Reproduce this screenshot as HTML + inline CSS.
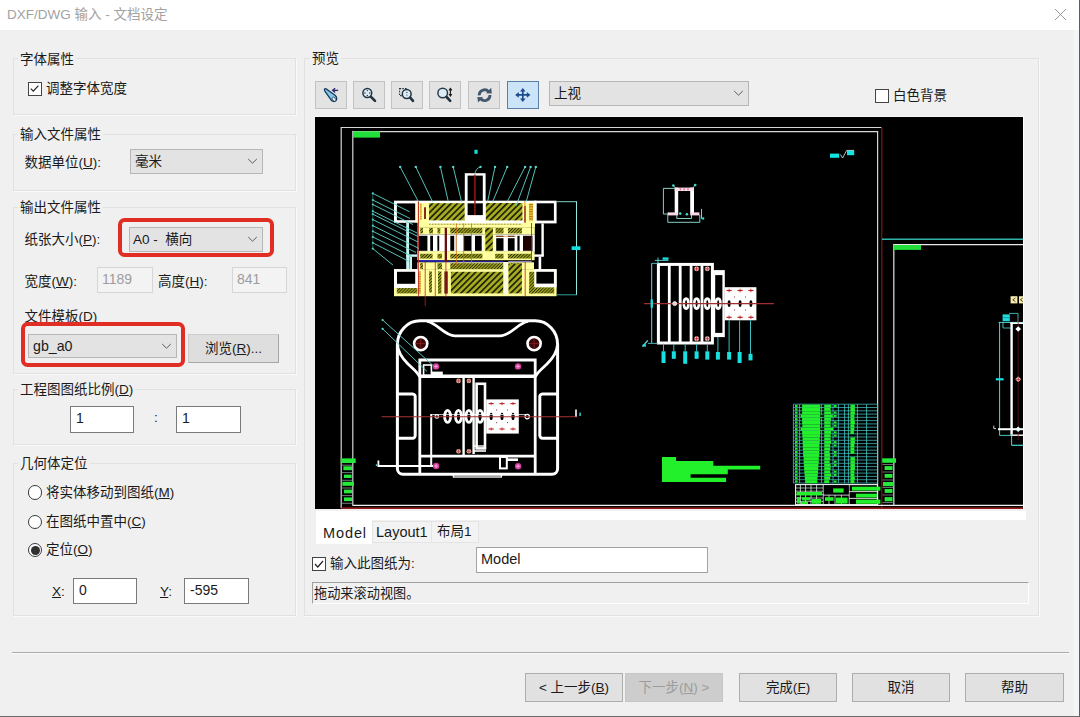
<!DOCTYPE html>
<html lang="zh-CN">
<head>
<meta charset="utf-8">
<title>DXF/DWG 输入 - 文档设定</title>
<style>
html,body{margin:0;padding:0;}
body{width:1080px;height:717px;overflow:hidden;background:#f0f0f0;position:relative;
 font-family:"Liberation Sans","Noto Sans CJK SC",sans-serif;font-size:13.5px;color:#1a1a1a;}
.abs{position:absolute;}
#titlebar{left:0;top:0;width:1080px;height:30px;background:#fff;}
#title{left:7px;top:5px;font-size:13.5px;color:#a2a2a2;line-height:20px;white-space:nowrap;}
.grp{position:absolute;border:1px solid #e1e1e1;box-shadow:1px 1px 0 #fafafa;box-sizing:border-box;}
.glabel{position:absolute;background:#f0f0f0;line-height:16px;white-space:nowrap;padding:0 2px;font-size:13.5px;}
.t{position:absolute;line-height:18px;white-space:nowrap;font-size:13.5px;}
u{text-decoration:underline;text-underline-offset:1px;text-decoration-thickness:1px;}
.combo{position:absolute;box-sizing:border-box;border:1px solid #b6b6b6;background:#e3e3e3;}
.combo .v{position:absolute;left:4px;top:0;line-height:22px;font-size:13.5px;white-space:nowrap;}
.combo svg{position:absolute;right:4px;top:8px;}
.inp{position:absolute;box-sizing:border-box;border:1px solid #7a7a7a;background:#fff;font-size:14px;}
.inp span{position:absolute;left:5px;top:1px;line-height:20px;}
.inp.dis span{left:4px;}
.inp.dis{border-color:#d6d6d6;background:#f3f3f3;color:#9d9d9d;}
.btn{position:absolute;box-sizing:border-box;border:1px solid #adadad;background:#e1e1e1;text-align:center;font-size:13.5px;white-space:nowrap;}
.red{position:absolute;box-sizing:border-box;border:4.2px solid #e02e24;border-radius:6.5px;}
.cb{position:absolute;box-sizing:border-box;width:14px;height:14px;border:1px solid #444;background:#fff;}
.rad{position:absolute;box-sizing:border-box;width:14.2px;height:14.2px;border:1px solid #3a3a3a;border-radius:50%;background:#fff;}
.tb{position:absolute;box-sizing:border-box;width:32px;height:28px;top:81px;border:1px solid #c2c2c2;background:#e3e3e3;}
</style>
</head>
<body>
<div id="titlebar" class="abs"></div>
<div id="title" class="abs">DXF/DWG 输入 - 文档设定</div>
<svg class="abs" style="left:1054px;top:8px" width="13" height="13" viewBox="0 0 13 13"><path d="M1 1 L12 12 M12 1 L1 12" stroke="#9a9a9a" stroke-width="1" fill="none"/></svg>

<div class="abs" style="left:1074px;top:30px;width:5px;height:686px;background:#f5f5f8;"></div>
<div class="abs" style="left:1079px;top:0;width:1px;height:717px;background:#5c5c64;"></div>
<div class="abs" style="left:0;top:716px;width:1080px;height:1px;background:#6a6a6a;"></div>
<!-- LEFT GROUPS -->
<div class="grp" style="left:13px;top:58px;width:283px;height:57px;"></div>
<div class="glabel" style="left:18px;top:52px;">字体属性</div>

<div class="grp" style="left:13px;top:134px;width:283px;height:57px;"></div>
<div class="glabel" style="left:18px;top:127px;">输入文件属性</div>

<div class="grp" style="left:13px;top:207px;width:283px;height:167px;"></div>
<div class="glabel" style="left:18px;top:200px;">输出文件属性</div>

<div class="grp" style="left:13px;top:389px;width:283px;height:56px;"></div>
<div class="glabel" style="left:18px;top:382px;">工程图图纸比例(<u>D</u>)</div>

<div class="grp" style="left:13px;top:463px;width:283px;height:153px;"></div>
<div class="glabel" style="left:18px;top:456px;">几何体定位</div>

<!-- PREVIEW GROUP -->
<div class="grp" style="left:304px;top:58px;width:735px;height:558px;"></div>
<div class="glabel" style="left:310px;top:51px;">预览</div>

<!-- group 1 -->
<div class="cb" style="left:28px;top:82px;"></div>
<svg class="abs" style="left:28px;top:82px" width="13" height="13" viewBox="0 0 13 13"><path d="M2.8 6.6 L5.3 9.2 L10.4 3.6" stroke="#222" stroke-width="1.2" fill="none"/></svg>
<div class="t" style="left:46px;top:80px;">调整字体宽度</div>

<!-- group 2 -->
<div class="t" style="left:24.5px;top:153.5px;">数据单位(<u>U</u>):</div>
<div class="combo" style="left:130px;top:149px;width:133px;height:25px;"><span class="v" style="top:1px">毫米</span>
<svg width="11" height="7" viewBox="0 0 11 7"><path d="M1.2 1 L5.5 5.2 L9.8 1" stroke="#5a5a5a" stroke-width="1" fill="none"/></svg></div>

<!-- group 3 -->
<div class="t" style="left:24.5px;top:231px;">纸张大小(<u>P</u>):</div>
<div class="red" style="left:118px;top:218px;width:156px;height:39px;"></div>
<div class="combo" style="left:129px;top:227px;width:134px;height:25px;"><span class="v" style="top:1px;left:3px">A0 -&nbsp; 横向</span>
<svg width="11" height="7" viewBox="0 0 11 7"><path d="M1.2 1 L5.5 5.2 L9.8 1" stroke="#5a5a5a" stroke-width="1" fill="none"/></svg></div>

<div class="t" style="left:24.5px;top:273px;">宽度(<u>W</u>):</div>
<div class="inp dis" style="left:97px;top:267px;width:56px;height:26px;"><span>1189</span></div>
<div class="t" style="left:158px;top:273px;">高度(<u>H</u>):</div>
<div class="inp dis" style="left:232px;top:267px;width:55px;height:26px;"><span>841</span></div>

<div class="t" style="left:24.5px;top:307.6px;">文件模板(<u>D</u>)</div>
<div class="red" style="left:20.8px;top:322px;width:164.2px;height:45px;"></div>
<div class="combo" style="left:28px;top:334px;width:149px;height:24px;"><span class="v" style="top:0px;left:4px;font-size:14.2px">gb_a0</span>
<svg width="11" height="7" viewBox="0 0 11 7"><path d="M1.2 1 L5.5 5.2 L9.8 1" stroke="#5a5a5a" stroke-width="1" fill="none"/></svg></div>
<div class="btn" style="left:188px;top:334px;width:91px;height:29px;line-height:27px;border-color:#cdcdcd #a6a6a6 #a6a6a6 #cdcdcd;background:#dedede;">浏览(<u>R</u>)...</div>

<!-- group 4 -->
<div class="inp" style="left:70px;top:406px;width:64px;height:27px;"><span>1</span></div>
<div class="t" style="left:154px;top:409px;">:</div>
<div class="inp" style="left:176px;top:406px;width:65px;height:27px;"><span>1</span></div>

<!-- group 5 -->
<div class="rad" style="left:28.3px;top:485.4px;"></div>
<div class="t" style="left:46px;top:484px;">将实体移动到图纸(<u>M</u>)</div>
<div class="rad" style="left:28.3px;top:514.6px;"></div>
<div class="t" style="left:46px;top:513px;">在图纸中置中(<u>C</u>)</div>
<div class="rad" style="left:28.3px;top:543.1px;"></div>
<div class="abs" style="left:30.8px;top:545.6px;width:9px;height:9px;border-radius:50%;background:#303030;"></div>
<div class="t" style="left:46px;top:541.4px;">定位(<u>O</u>)</div>

<div class="t" style="left:52px;top:583px;"><u>X</u>:</div>
<div class="inp" style="left:73px;top:578px;width:64px;height:26px;"><span>0</span></div>
<div class="t" style="left:160px;top:583px;"><u>Y</u>:</div>
<div class="inp" style="left:184px;top:578px;width:65px;height:26px;"><span>-595</span></div>

<!-- separator -->
<div class="abs" style="left:12px;top:652px;width:1057px;height:1px;background:#a9a9a9;"></div>
<div class="abs" style="left:12px;top:653px;width:1057px;height:1px;background:#fbfbfb;"></div>

<!-- bottom buttons -->
<div class="btn" style="left:525px;top:673px;width:98px;height:29px;line-height:27px;">&lt; 上一步(<u>B</u>)</div>
<div class="btn" style="left:625px;top:673px;width:98px;height:29px;line-height:27px;color:#9c9c9c;background:#cdcdcd;border-color:#c6c6c6;">下一步(<u>N</u>) &gt;</div>
<div class="btn" style="left:739px;top:673px;width:98px;height:29px;line-height:27px;">完成(<u>F</u>)</div>
<div class="btn" style="left:852px;top:673px;width:98px;height:29px;line-height:27px;">取消</div>
<div class="btn" style="left:965px;top:673px;width:99px;height:29px;line-height:27px;">帮助</div>
<!-- toolbar -->
<div class="tb" style="left:315px;"></div>
<div class="tb" style="left:353px;"></div>
<div class="tb" style="left:391px;"></div>
<div class="tb" style="left:429px;"></div>
<div class="tb" style="left:468px;"></div>
<div class="tb" style="left:507px;background:#cce4f7;border-color:#5b7fa6;"></div>
<svg class="abs" style="left:315px;top:81px" width="224" height="28" viewBox="315 81 224 28">
 <!-- icon1 flashlight -->
 <g>
  <path d="M324.3 89.6 Q324.6 88.4 326 88.8 L335.4 95.6 Q337.6 98 336.2 100.4 Q334.4 102.4 331.8 100.8 L325 91.4 Z" fill="#86c4e6" stroke="#123456" stroke-width="1.2" stroke-linejoin="round"/>
  <ellipse cx="334" cy="99.2" rx="1.5" ry="2.3" transform="rotate(-42 334 99.2)" fill="#e8f8ff" stroke="#123456" stroke-width="0.7"/>
  <path d="M338.2 90.3 H333 M335.2 88.2 L332.6 90.3 L335.2 92.4" stroke="#2c2c6c" stroke-width="1.3" fill="none"/>
 </g>
 <!-- icon2 zoom fit -->
 <g>
  <circle cx="367.3" cy="93" r="4.4" fill="#dcecf6" stroke="#22323e" stroke-width="1.5"/>
  <path d="M371 96.8 L375 100.8" stroke="#22323e" stroke-width="2.6" stroke-linecap="round"/>
  <g fill="#22323e"><circle cx="367.3" cy="90.6" r="0.7"/><circle cx="367.3" cy="95.4" r="0.7"/><circle cx="364.9" cy="93" r="0.7"/><circle cx="369.7" cy="93" r="0.7"/></g>
 </g>
 <!-- icon3 zoom area -->
 <g>
  <rect x="399.6" y="88.6" width="7" height="7" fill="none" stroke="#22323e" stroke-width="1.1" stroke-dasharray="1.6 1.1"/>
  <circle cx="406.7" cy="94" r="4.4" fill="#dcecf6" stroke="#22323e" stroke-width="1.5"/>
  <path d="M410.2 97.6 L413 100.8" stroke="#22323e" stroke-width="2.6" stroke-linecap="round"/>
  <g fill="#22323e"><circle cx="406.9" cy="92.4" r="0.6"/><circle cx="406.9" cy="95" r="0.6"/></g>
 </g>
 <!-- icon4 zoom in/out -->
 <g>
  <circle cx="442.7" cy="93" r="4.8" fill="#dcecf6" stroke="#2a3c4a" stroke-width="1.5"/>
  <path d="M446.6 97 L450.2 100.8" stroke="#22323e" stroke-width="2.6" stroke-linecap="round"/>
  <path d="M450.4 89 V95.4 M449 90.4 L450.4 88.4 L451.8 90.4 M449 94 L450.4 96 L451.8 94" stroke="#1a1a1a" stroke-width="1.1" fill="none"/>
 </g>
 <!-- icon5 rotate -->
 <g fill="none" stroke="#43576b" stroke-width="2.8">
  <path d="M479.2 95.4 A5.4 5.4 0 0 1 488.6 91.6"/>
  <path d="M490 95 A5.4 5.4 0 0 1 480.6 98.8"/>
  <path d="M486 93.2 L491.8 93.4 L491.2 87.8 Z" fill="#43576b" stroke="none"/>
  <path d="M483.2 97.2 L477.4 97 L478 102.6 Z" fill="#43576b" stroke="none"/>
 </g>
 <!-- icon6 pan -->
 <g fill="#1c4a8e" stroke="#1c4a8e">
  <path d="M522.8 90 V100 M517.4 94.9 H528.2" stroke-width="1.7"/>
  <path d="M522.8 88 L520 91.4 H525.6 Z M522.8 102 L520 98.6 H525.6 Z M515.2 94.9 L518.8 92.1 V97.7 Z M530.4 94.9 L526.8 92.1 V97.7 Z" stroke="none"/>
 </g>
</svg>
<div class="combo" style="left:549px;top:81px;width:200px;height:25px;"><span class="v" style="top:1px;left:4px">上视</span>
<svg width="11" height="7" viewBox="0 0 11 7"><path d="M1.2 1 L5.5 5.2 L9.8 1" stroke="#5a5a5a" stroke-width="1" fill="none"/></svg></div>
<div class="cb" style="left:875px;top:89px;"></div>
<div class="t" style="left:893px;top:87px;">白色背景</div>

<!-- canvas -->
<div class="abs" style="left:315px;top:117px;width:708px;height:392px;background:#000;box-shadow:1px 0 0 #fff,0 -1px 0 #f8f8f8,1px -1px 0 #fff;"></div>
<!--CAD-->
<svg class="abs" style="left:315px;top:117px" width="708" height="392" viewBox="315 117 708 392">
<defs>
<pattern id="hat" width="4.4" height="4.4" patternUnits="userSpaceOnUse" patternTransform="rotate(-45)">
<rect width="4.4" height="4.4" fill="#a6ac22"/><rect width="4.4" height="1.6" fill="#181800"/></pattern>
<pattern id="hat2" width="2.2" height="2.2" patternUnits="userSpaceOnUse" patternTransform="rotate(-45)">
<rect width="2.2" height="2.2" fill="#a4aa22"/><rect width="2.2" height="0.9" fill="#2a2a00"/></pattern>
<pattern id="tex" width="2" height="2.4" patternUnits="userSpaceOnUse">
<rect width="2" height="2.4" fill="#e8c040"/><rect width="2" height="1" fill="#b07818"/></pattern>
</defs>
<rect x="315" y="117" width="708" height="392" fill="#000"/>
<line x1="341.0" y1="127.5" x2="881.5" y2="127.5" stroke="#d6d6d6" stroke-width="1.2" />
<line x1="341.2" y1="127.0" x2="341.2" y2="508.0" stroke="#d6d6d6" stroke-width="1.2" />
<line x1="881.8" y1="127.0" x2="881.8" y2="509.0" stroke="#941414" stroke-width="1.1" />
<line x1="341.0" y1="508.2" x2="1023.0" y2="508.2" stroke="#c42424" stroke-width="1.3" />
<line x1="352.6" y1="131.6" x2="877.6" y2="131.6" stroke="#d6d6d6" stroke-width="1.2" />
<line x1="352.8" y1="131.0" x2="352.8" y2="505.5" stroke="#d6d6d6" stroke-width="1.2" />
<line x1="877.6" y1="131.0" x2="877.6" y2="505.5" stroke="#d6d6d6" stroke-width="1.2" />
<line x1="352.6" y1="505.3" x2="1023.0" y2="505.3" stroke="#f0f0f0" stroke-width="1.3" />
<rect x="353.0" y="131.4" width="27.0" height="6.2" fill="#22e03a" />
<line x1="882.0" y1="239.3" x2="1023.0" y2="239.3" stroke="#2fb3a8" stroke-width="1.4" />
<line x1="893.6" y1="244.6" x2="1023.0" y2="244.6" stroke="#e8e8e8" stroke-width="1.3" />
<line x1="893.8" y1="244.0" x2="893.8" y2="505.5" stroke="#d0d0d0" stroke-width="1.3" />
<rect x="894.0" y="245.0" width="27.0" height="4.9" fill="#22dd3a" />
<line x1="341.5" y1="465.2" x2="352.5" y2="465.2" stroke="#8a9a9a" stroke-width="0.8" />
<line x1="341.5" y1="472.6" x2="352.5" y2="472.6" stroke="#8a9a9a" stroke-width="0.8" />
<line x1="341.5" y1="480.3" x2="352.5" y2="480.3" stroke="#8a9a9a" stroke-width="0.8" />
<line x1="341.5" y1="488.0" x2="352.5" y2="488.0" stroke="#8a9a9a" stroke-width="0.8" />
<line x1="341.5" y1="495.6" x2="352.5" y2="495.6" stroke="#8a9a9a" stroke-width="0.8" />
<line x1="341.5" y1="503.3" x2="352.5" y2="503.3" stroke="#8a9a9a" stroke-width="0.8" />
<rect x="340.7" y="458.4" width="15.0" height="4.6" fill="#25e83a" />
<rect x="343.4" y="466.3" width="8.6" height="3.9" fill="#25e83a" />
<rect x="344.0" y="474.6" width="7.6" height="3.4" fill="#25e83a" />
<rect x="342.4" y="481.8" width="11.6" height="4.0" fill="#25e83a" />
<rect x="344.0" y="489.6" width="8.0" height="3.7" fill="#25e83a" />
<rect x="344.0" y="497.4" width="8.0" height="3.7" fill="#25e83a" />
<line x1="882.5" y1="464.5" x2="893.5" y2="464.5" stroke="#7a9090" stroke-width="0.8" />
<line x1="882.5" y1="472.0" x2="893.5" y2="472.0" stroke="#7a9090" stroke-width="0.8" />
<line x1="882.5" y1="480.0" x2="893.5" y2="480.0" stroke="#7a9090" stroke-width="0.8" />
<line x1="882.5" y1="487.5" x2="893.5" y2="487.5" stroke="#7a9090" stroke-width="0.8" />
<line x1="882.5" y1="495.0" x2="893.5" y2="495.0" stroke="#7a9090" stroke-width="0.8" />
<line x1="882.5" y1="502.5" x2="893.5" y2="502.5" stroke="#7a9090" stroke-width="0.8" />
<rect x="882.2" y="458.3" width="13.8" height="4.5" fill="#25e83a" />
<rect x="884.6" y="466.1" width="7.9" height="3.9" fill="#25e83a" />
<rect x="884.6" y="474.0" width="7.9" height="3.8" fill="#25e83a" />
<rect x="883.0" y="482.0" width="11.0" height="4.2" fill="#25e83a" />
<rect x="884.6" y="489.0" width="7.9" height="3.9" fill="#25e83a" />
<rect x="884.6" y="497.1" width="7.9" height="4.2" fill="#25e83a" />
<rect x="830.0" y="153.6" width="9.2" height="4.2" fill="#10e4e4" />
<rect x="847.0" y="150.6" width="7.2" height="4.6" fill="#10e4e4" />
<path d="M840.5 154.5 L842.6 158 L846.6 150.4 H854" stroke="#c8f0f0" stroke-width="0.8" fill="none"/>
<rect x="415.4" y="201.0" width="121.0" height="22.2" fill="#ffffa0" />
<rect x="394.0" y="200.7" width="22.6" height="22.1" fill="#fff" />
<rect x="396.9" y="203.4" width="18.3" height="16.8" fill="#000" />
<rect x="534.2" y="200.7" width="22.4" height="22.7" fill="#fff" />
<rect x="536.7" y="203.3" width="17.2" height="17.3" fill="#000" />
<rect x="415.4" y="200.7" width="121.0" height="2.3" fill="#fff" />
<rect x="429.0" y="203.2" width="35.8" height="17.4" fill="url(#hat)" />
<rect x="485.6" y="203.0" width="36.8" height="17.6" fill="url(#hat)" />
<line x1="418.4" y1="201.0" x2="418.4" y2="296.0" stroke="#d87820" stroke-width="0.9" />
<rect x="424.1" y="207.3" width="1.8" height="11.7" fill="#7a1010" />
<rect x="420.2" y="203.5" width="1.4" height="16.5" fill="url(#tex)" />
<line x1="524.9" y1="201.0" x2="524.9" y2="234.0" stroke="#e08020" stroke-width="0.9" />
<rect x="524.4" y="206.0" width="1.2" height="28.0" fill="#8a1414" />
<rect x="529.0" y="203.4" width="4.0" height="17.3" fill="url(#tex)" />
<rect x="464.8" y="173.2" width="20.8" height="49.4" fill="#fff" />
<rect x="467.6" y="175.6" width="15.2" height="39.5" fill="#000" />
<rect x="464.8" y="200.8" width="20.8" height="2.5" fill="#fff" />
<line x1="474.9" y1="174.6" x2="474.9" y2="215.0" stroke="#a01818" stroke-width="1.4" />
<rect x="417.4" y="222.6" width="117.6" height="5.0" fill="#ffffa0" />
<rect x="428.6" y="220.6" width="94.4" height="2.8" fill="#fff" />
<line x1="429.0" y1="224.2" x2="522.0" y2="224.2" stroke="#807020" stroke-width="1" stroke-dasharray="0.8 0.7"/>
<rect x="417.4" y="227.4" width="117.4" height="7.2" fill="#ffffa0" />
<rect x="420.2" y="228.0" width="2.8" height="5.4" fill="url(#hat2)" />
<rect x="429.1" y="228.0" width="3.9" height="5.4" fill="url(#hat2)" />
<rect x="437.5" y="228.0" width="2.8" height="5.4" fill="url(#hat2)" />
<rect x="450.3" y="228.0" width="32.0" height="5.4" fill="url(#hat2)" />
<rect x="485.6" y="228.0" width="6.7" height="5.4" fill="url(#hat2)" />
<rect x="495.6" y="228.0" width="7.9" height="5.4" fill="url(#hat2)" />
<rect x="507.9" y="228.0" width="14.0" height="5.4" fill="url(#hat2)" />
<rect x="417.4" y="234.6" width="117.4" height="17.0" fill="#fff" />
<rect x="418.5" y="235.8" width="8.9" height="15.0" fill="#000" />
<rect x="430.2" y="235.8" width="2.8" height="15.0" fill="#000" />
<rect x="437.4" y="235.8" width="1.8" height="15.0" fill="#000" />
<rect x="450.3" y="235.8" width="3.9" height="15.0" fill="#000" />
<rect x="463.7" y="235.8" width="7.8" height="15.0" fill="#000" />
<rect x="475.0" y="235.8" width="6.7" height="15.0" fill="#000" />
<rect x="496.2" y="235.8" width="7.3" height="15.0" fill="#000" />
<rect x="507.9" y="235.8" width="6.7" height="15.0" fill="#000" />
<rect x="517.4" y="235.8" width="2.2" height="15.0" fill="#000" />
<rect x="523.0" y="235.8" width="9.5" height="15.0" fill="#1c0000" />
<rect x="455.6" y="235.8" width="0.8" height="15.0" fill="#9ec8d8" />
<line x1="495.6" y1="237.6" x2="515.8" y2="237.6" stroke="#fff" stroke-width="1.2" />
<line x1="495.6" y1="236.3" x2="515.8" y2="236.3" stroke="#e08030" stroke-width="0.7" />
<rect x="485.2" y="227.8" width="7.7" height="31.4" fill="url(#hat)" />
<rect x="483.6" y="234.6" width="1.6" height="24.4" fill="#ffffa0" />
<rect x="492.9" y="234.6" width="1.7" height="24.4" fill="#ffffa0" />
<rect x="406.2" y="222.8" width="3.0" height="46.5" fill="#c8f4f4" />
<rect x="409.2" y="222.8" width="8.2" height="28.6" fill="#000" />
<rect x="406.2" y="254.4" width="10.8" height="2.4" fill="#c8f4f4" />
<rect x="409.4" y="256.8" width="2.6" height="12.5" fill="#c8f4f4" />
<rect x="541.4" y="223.4" width="2.4" height="32.4" fill="#fff" />
<rect x="534.0" y="254.4" width="9.8" height="2.4" fill="#fff" />
<rect x="538.6" y="256.8" width="2.6" height="12.5" fill="#fff" />
<rect x="417.4" y="251.2" width="117.2" height="9.0" fill="#ffffa0" />
<rect x="420.2" y="253.8" width="12.4" height="4.7" fill="url(#hat2)" />
<rect x="437.5" y="253.8" width="4.5" height="4.7" fill="url(#hat2)" />
<rect x="450.3" y="253.8" width="32.1" height="4.7" fill="url(#hat2)" />
<rect x="495.2" y="253.8" width="8.3" height="4.7" fill="url(#hat2)" />
<rect x="507.9" y="253.8" width="22.9" height="4.7" fill="url(#hat2)" />
<path d="M418 261 H443 L445 262 H503.5" stroke="#2828d0" stroke-width="1.5" fill="none"/>
<line x1="508.0" y1="261.8" x2="532.0" y2="261.8" stroke="#9a90e0" stroke-width="1.3" />
<rect x="417.4" y="262.3" width="116.6" height="7.1" fill="#ffffa0" />
<rect x="420.2" y="263.2" width="2.8" height="5.8" fill="url(#hat2)" />
<rect x="437.5" y="263.2" width="4.5" height="5.8" fill="url(#hat2)" />
<rect x="450.3" y="263.2" width="53.2" height="5.8" fill="url(#hat2)" />
<rect x="508.5" y="263.2" width="13.4" height="5.8" fill="url(#hat2)" />
<rect x="394.0" y="269.2" width="162.6" height="27.0" fill="#ffffa0" />
<rect x="394.0" y="269.2" width="23.4" height="18.8" fill="#fff" />
<rect x="397.0" y="271.8" width="18.2" height="12.0" fill="#000" />
<rect x="396.8" y="288.0" width="20.6" height="5.4" fill="url(#hat2)" />
<rect x="534.2" y="269.2" width="22.4" height="18.2" fill="#fff" />
<rect x="536.4" y="271.8" width="17.5" height="11.8" fill="#000" />
<rect x="529.2" y="287.4" width="25.0" height="6.0" fill="url(#hat2)" />
<rect x="529.2" y="271.8" width="5.0" height="21.6" fill="url(#hat2)" />
<rect x="418.2" y="271.4" width="2.6" height="22.2" fill="url(#tex)" />
<rect x="429.1" y="271.4" width="2.8" height="21.0" fill="url(#hat2)" />
<rect x="438.0" y="271.4" width="3.4" height="22.2" fill="url(#hat2)" />
<rect x="444.4" y="271.4" width="3.3" height="22.2" fill="#5a0c0c" />
<rect x="444.7" y="227.8" width="2.3" height="34.2" fill="#6a1010" />
<rect x="450.9" y="271.8" width="52.6" height="21.6" fill="url(#hat)" />
<rect x="503.5" y="262.0" width="4.7" height="32.5" fill="#ffffe0" />
<rect x="508.5" y="264.0" width="13.4" height="29.4" fill="url(#hat)" />
<line x1="418.5" y1="201.0" x2="418.5" y2="297.0" stroke="#c02020" stroke-width="0.8" />
<line x1="425.2" y1="262.0" x2="425.2" y2="306.0" stroke="#c02020" stroke-width="0.8" />
<line x1="435.3" y1="262.0" x2="435.3" y2="296.0" stroke="#c02020" stroke-width="0.8" />
<line x1="445.9" y1="262.0" x2="445.9" y2="297.0" stroke="#c02020" stroke-width="0.8" />
<line x1="525.2" y1="262.0" x2="525.2" y2="296.0" stroke="#c02020" stroke-width="0.8" />
<line x1="456.4" y1="223.5" x2="456.4" y2="266.0" stroke="#d06a20" stroke-width="0.8" />
<line x1="463.7" y1="223.5" x2="463.7" y2="266.0" stroke="#d06a20" stroke-width="0.8" />
<line x1="471.5" y1="223.5" x2="471.5" y2="266.0" stroke="#d06a20" stroke-width="0.8" />
<line x1="531.5" y1="223.0" x2="531.5" y2="262.0" stroke="#802020" stroke-width="0.8" />
<line x1="556.6" y1="201.7" x2="577.0" y2="201.7" stroke="#8fe8e0" stroke-width="0.9" />
<line x1="556.6" y1="294.8" x2="577.0" y2="294.8" stroke="#38b0a8" stroke-width="0.9" />
<line x1="576.5" y1="201.7" x2="576.5" y2="294.8" stroke="#8fe8e0" stroke-width="1" />
<rect x="571.6" y="246.3" width="8.8" height="3.7" fill="#10e0e0" />
<line x1="400.2" y1="166.9" x2="418.4" y2="201.7" stroke="#5cd6cc" stroke-width="0.9" />
<circle cx="400.2" cy="166.9" r="1.2" fill="#5cd6cc"/>
<line x1="415.8" y1="166.9" x2="432.5" y2="201.7" stroke="#5cd6cc" stroke-width="0.9" />
<circle cx="415.8" cy="166.9" r="1.2" fill="#5cd6cc"/>
<line x1="440.4" y1="166.9" x2="448.1" y2="200.8" stroke="#5cd6cc" stroke-width="0.9" />
<circle cx="440.4" cy="166.9" r="1.2" fill="#5cd6cc"/>
<line x1="453.2" y1="166.9" x2="461.5" y2="201.7" stroke="#5cd6cc" stroke-width="0.9" />
<circle cx="453.2" cy="166.9" r="1.2" fill="#5cd6cc"/>
<line x1="495.0" y1="166.9" x2="487.6" y2="201.7" stroke="#5cd6cc" stroke-width="0.9" />
<circle cx="495.0" cy="166.9" r="1.2" fill="#5cd6cc"/>
<line x1="507.2" y1="166.9" x2="492.7" y2="201.7" stroke="#5cd6cc" stroke-width="0.9" />
<circle cx="507.2" cy="166.9" r="1.2" fill="#5cd6cc"/>
<line x1="525.1" y1="166.9" x2="507.2" y2="201.7" stroke="#5cd6cc" stroke-width="0.9" />
<circle cx="525.1" cy="166.9" r="1.2" fill="#5cd6cc"/>
<line x1="530.6" y1="166.9" x2="516.1" y2="205.8" stroke="#5cd6cc" stroke-width="0.9" />
<circle cx="530.6" cy="166.9" r="1.2" fill="#5cd6cc"/>
<line x1="535.8" y1="166.9" x2="526.2" y2="201.7" stroke="#5cd6cc" stroke-width="0.9" />
<circle cx="535.8" cy="166.9" r="1.2" fill="#5cd6cc"/>
<path d="M480.5 166.9 Q475.5 168.5 474.9 174" stroke="#5cd6cc" stroke-width="0.9" fill="none"/>
<circle cx="480.5" cy="166.9" r="1.2" fill="#5cd6cc"/>
<rect x="474.4" y="149.8" width="3.2" height="4.0" fill="#10e0e0" />
<line x1="372.8" y1="193.4" x2="409.6" y2="211.8" stroke="#5cd6cc" stroke-width="0.9" />
<circle cx="372.8" cy="193.4" r="1.1" fill="#5cd6cc"/>
<line x1="372.8" y1="200.0" x2="410.0" y2="218.5" stroke="#5cd6cc" stroke-width="0.9" />
<circle cx="372.8" cy="200.0" r="1.1" fill="#5cd6cc"/>
<line x1="372.8" y1="204.5" x2="413.0" y2="224.5" stroke="#5cd6cc" stroke-width="0.9" />
<circle cx="372.8" cy="204.5" r="1.1" fill="#5cd6cc"/>
<line x1="372.8" y1="211.2" x2="417.0" y2="233.0" stroke="#5cd6cc" stroke-width="0.9" />
<circle cx="372.8" cy="211.2" r="1.1" fill="#5cd6cc"/>
<line x1="372.8" y1="214.2" x2="418.0" y2="236.5" stroke="#5cd6cc" stroke-width="0.9" />
<circle cx="372.8" cy="214.2" r="1.1" fill="#5cd6cc"/>
<line x1="372.8" y1="219.6" x2="418.0" y2="242.0" stroke="#5cd6cc" stroke-width="0.9" />
<circle cx="372.8" cy="219.6" r="1.1" fill="#5cd6cc"/>
<line x1="372.8" y1="225.7" x2="419.0" y2="248.5" stroke="#5cd6cc" stroke-width="0.9" />
<circle cx="372.8" cy="225.7" r="1.1" fill="#5cd6cc"/>
<line x1="372.8" y1="231.3" x2="416.0" y2="252.5" stroke="#5cd6cc" stroke-width="0.9" />
<circle cx="372.8" cy="231.3" r="1.1" fill="#5cd6cc"/>
<line x1="372.8" y1="236.9" x2="412.0" y2="256.5" stroke="#5cd6cc" stroke-width="0.9" />
<circle cx="372.8" cy="236.9" r="1.1" fill="#5cd6cc"/>
<line x1="372.8" y1="242.8" x2="408.5" y2="261.2" stroke="#5cd6cc" stroke-width="0.9" />
<circle cx="372.8" cy="242.8" r="1.1" fill="#5cd6cc"/>
<line x1="372.8" y1="248.6" x2="392.9" y2="265.0" stroke="#5cd6cc" stroke-width="0.9" />
<circle cx="372.8" cy="248.6" r="1.1" fill="#5cd6cc"/>
<line x1="372.8" y1="193.4" x2="372.8" y2="248.6" stroke="#3a9a94" stroke-width="0.6" />
<path d="M420 320.8 H535.2 A22.4 23.6 0 0 1 557.6 344.4 V468.7 A5.6 5.6 0 0 1 552 474.3 H403 A5.6 5.6 0 0 1 397.4 468.7 V344.4 A22.6 23.6 0 0 1 420 320.8 Z" fill="none" stroke="#fff" stroke-width="3"/>
<path d="M427 321.4 C437 322.6 444 335.8 455 335.9 H500 C511 335.8 518 322.6 528.2 321.4" fill="none" stroke="#fff" stroke-width="2.8"/>
<path d="M397.6 345 C398 354 404 360 408 364 S418 372 419.6 377" fill="none" stroke="#fff" stroke-width="2.8"/>
<path d="M557.4 345 C557 354 551 360 547 364 S537 372 535.4 377" fill="none" stroke="#fff" stroke-width="2.8"/>
<circle cx="420.7" cy="343.6" r="6.6" fill="#3a0808" stroke="#fff" stroke-width="2.6"/>
<line x1="415.7" y1="343.6" x2="425.7" y2="343.6" stroke="#902020" stroke-width="0.8" />
<line x1="420.7" y1="338.6" x2="420.7" y2="348.6" stroke="#902020" stroke-width="0.8" />
<circle cx="534.1" cy="343.6" r="6.6" fill="#3a0808" stroke="#fff" stroke-width="2.6"/>
<line x1="529.1" y1="343.6" x2="539.1" y2="343.6" stroke="#902020" stroke-width="0.8" />
<line x1="534.1" y1="338.6" x2="534.1" y2="348.6" stroke="#902020" stroke-width="0.8" />
<path d="M419.8 474.3 V360 H535.2 V474.3" fill="none" stroke="#fff" stroke-width="2.8"/>
<line x1="419.8" y1="376.2" x2="535.2" y2="376.2" stroke="#fff" stroke-width="3.4" />
<line x1="419.8" y1="456.2" x2="535.2" y2="456.2" stroke="#fff" stroke-width="2.8" />
<line x1="431.2" y1="414.0" x2="431.2" y2="466.6" stroke="#fff" stroke-width="2" />
<path d="M397.4 394 H412.6 A2.6 2.6 0 0 1 415.2 397.2 V435.6 A2.6 2.6 0 0 1 412.6 438.2 H397.4" fill="none" stroke="#fff" stroke-width="3"/>
<path d="M557.6 394 H542.4 A2.6 2.6 0 0 0 539.8 397.2 V435.6 A2.6 2.6 0 0 0 542.4 438.2 H557.6" fill="none" stroke="#fff" stroke-width="3"/>
<rect x="423.6" y="365.0" width="7.8" height="10.4" fill="none" stroke="#fff" stroke-width="1.6" />
<rect x="431.4" y="371.6" width="11.4" height="4.4" fill="#fff" />
<rect x="500.0" y="457.0" width="6.8" height="11.4" fill="none" stroke="#fff" stroke-width="2" />
<rect x="507.0" y="458.4" width="11.0" height="2.6" fill="#fff" />
<rect x="453.4" y="474.4" width="48.0" height="2.6" fill="none" stroke="#fff" stroke-width="1.3" />
<line x1="463.6" y1="376.6" x2="463.6" y2="457.0" stroke="#fff" stroke-width="2.4" />
<line x1="473.6" y1="376.6" x2="473.6" y2="454.0" stroke="#fff" stroke-width="2.4" />
<rect x="476.6" y="383.8" width="8.4" height="64.6" fill="none" stroke="#fff" stroke-width="2.6" />
<line x1="473.6" y1="446.0" x2="485.2" y2="446.0" stroke="#fff" stroke-width="1.4" />
<line x1="473.6" y1="451.0" x2="486.0" y2="451.0" stroke="#fff" stroke-width="1.6" />
<rect x="486.2" y="399.4" width="32.6" height="34.2" fill="#fff" />
<ellipse cx="491.2" cy="416.4" rx="1.6" ry="3.6" fill="#000"/>
<line x1="488.6" y1="403.6" x2="493.8" y2="403.6" stroke="#c02020" stroke-width="1.1" />
<line x1="491.2" y1="402.0" x2="491.2" y2="405.2" stroke="#c02020" stroke-width="0.8" />
<line x1="488.6" y1="429.0" x2="493.8" y2="429.0" stroke="#c02020" stroke-width="1.1" />
<line x1="491.2" y1="427.4" x2="491.2" y2="430.6" stroke="#c02020" stroke-width="0.8" />
<ellipse cx="502" cy="416.4" rx="1.6" ry="3.6" fill="#000"/>
<line x1="499.4" y1="403.6" x2="504.6" y2="403.6" stroke="#c02020" stroke-width="1.1" />
<line x1="502.0" y1="402.0" x2="502.0" y2="405.2" stroke="#c02020" stroke-width="0.8" />
<line x1="499.4" y1="429.0" x2="504.6" y2="429.0" stroke="#c02020" stroke-width="1.1" />
<line x1="502.0" y1="427.4" x2="502.0" y2="430.6" stroke="#c02020" stroke-width="0.8" />
<ellipse cx="513" cy="416.4" rx="1.6" ry="3.6" fill="#000"/>
<line x1="510.4" y1="403.6" x2="515.6" y2="403.6" stroke="#c02020" stroke-width="1.1" />
<line x1="513.0" y1="402.0" x2="513.0" y2="405.2" stroke="#c02020" stroke-width="0.8" />
<line x1="510.4" y1="429.0" x2="515.6" y2="429.0" stroke="#c02020" stroke-width="1.1" />
<line x1="513.0" y1="427.4" x2="513.0" y2="430.6" stroke="#c02020" stroke-width="0.8" />
<rect x="496.1" y="409.5" width="1.0" height="1.0" fill="#803030" />
<rect x="496.1" y="422.1" width="1.0" height="1.0" fill="#803030" />
<rect x="507.0" y="409.5" width="1.0" height="1.0" fill="#803030" />
<rect x="507.0" y="422.1" width="1.0" height="1.0" fill="#803030" />
<ellipse cx="447.6" cy="416.4" rx="3" ry="6" fill="#000" stroke="#fff" stroke-width="2.8"/>
<ellipse cx="458.5" cy="416.4" rx="3" ry="6" fill="#000" stroke="#fff" stroke-width="2.8"/>
<ellipse cx="468.9" cy="416.4" rx="3" ry="6" fill="#000" stroke="#fff" stroke-width="2.8"/>
<ellipse cx="480" cy="416.4" rx="3" ry="6" fill="#000" stroke="#fff" stroke-width="2.8"/>
<circle cx="436.8" cy="416.4" r="1.8" fill="#000" stroke="#fff" stroke-width="1.2"/>
<circle cx="527.2" cy="416.6" r="2.2" fill="#000" stroke="#fff" stroke-width="1.2"/>
<line x1="431.8" y1="414.6" x2="527.0" y2="414.6" stroke="#fff" stroke-width="0.8" />
<line x1="381.6" y1="416.7" x2="577.0" y2="416.7" stroke="#a83232" stroke-width="1.1" />
<circle cx="436.0" cy="366.4" r="3.2" fill="#d23a9c"/>
<line x1="434.0" y1="366.4" x2="438.0" y2="366.4" stroke="#ffd0f0" stroke-width="0.7" />
<line x1="436.0" y1="364.4" x2="436.0" y2="368.4" stroke="#ffd0f0" stroke-width="0.7" />
<circle cx="518.0" cy="366.4" r="3.2" fill="#d23a9c"/>
<line x1="516.0" y1="366.4" x2="520.0" y2="366.4" stroke="#ffd0f0" stroke-width="0.7" />
<line x1="518.0" y1="364.4" x2="518.0" y2="368.4" stroke="#ffd0f0" stroke-width="0.7" />
<circle cx="436.1" cy="466.0" r="3.2" fill="#d23a9c"/>
<line x1="434.1" y1="466.0" x2="438.1" y2="466.0" stroke="#ffd0f0" stroke-width="0.7" />
<line x1="436.1" y1="464.0" x2="436.1" y2="468.0" stroke="#ffd0f0" stroke-width="0.7" />
<circle cx="518.1" cy="466.2" r="3.2" fill="#d23a9c"/>
<line x1="516.1" y1="466.2" x2="520.1" y2="466.2" stroke="#ffd0f0" stroke-width="0.7" />
<line x1="518.1" y1="464.2" x2="518.1" y2="468.2" stroke="#ffd0f0" stroke-width="0.7" />
<circle cx="458.5" cy="380.9" r="2.3" fill="#f0b0a0"/>
<line x1="456.5" y1="380.9" x2="460.5" y2="380.9" stroke="#a03020" stroke-width="0.6" />
<line x1="458.5" y1="378.9" x2="458.5" y2="382.9" stroke="#a03020" stroke-width="0.6" />
<circle cx="468.9" cy="380.9" r="2.3" fill="#f0b0a0"/>
<line x1="466.9" y1="380.9" x2="470.9" y2="380.9" stroke="#a03020" stroke-width="0.6" />
<line x1="468.9" y1="378.9" x2="468.9" y2="382.9" stroke="#a03020" stroke-width="0.6" />
<circle cx="458.5" cy="451.2" r="2.3" fill="#f0b0a0"/>
<line x1="456.5" y1="451.2" x2="460.5" y2="451.2" stroke="#a03020" stroke-width="0.6" />
<line x1="458.5" y1="449.2" x2="458.5" y2="453.2" stroke="#a03020" stroke-width="0.6" />
<circle cx="468.9" cy="451.2" r="2.3" fill="#f0b0a0"/>
<line x1="466.9" y1="451.2" x2="470.9" y2="451.2" stroke="#a03020" stroke-width="0.6" />
<line x1="468.9" y1="449.2" x2="468.9" y2="453.2" stroke="#a03020" stroke-width="0.6" />
<line x1="382.6" y1="320.0" x2="432.8" y2="365.2" stroke="#5cd6cc" stroke-width="0.9" />
<circle cx="382.6" cy="320.0" r="1.1" fill="#5cd6cc"/>
<line x1="382.6" y1="328.8" x2="427.1" y2="371.5" stroke="#5cd6cc" stroke-width="0.9" />
<circle cx="382.6" cy="328.8" r="1.1" fill="#5cd6cc"/>
<path d="M378.4 460.4 V466 H433" fill="none" stroke="#fff" stroke-width="1.8"/>
<circle cx="376.6" cy="465.2" r="0.9" fill="#60d0d0"/>
<path d="M576 409.6 V416.6" fill="none" stroke="#fff" stroke-width="1.6"/>
<rect x="579.4" y="412.6" width="1.4" height="3.4" fill="#40d8d8" />
<rect x="658.4" y="264.4" width="54.0" height="78.6" fill="none" stroke="#fff" stroke-width="3" />
<line x1="669.3" y1="264.0" x2="669.3" y2="343.0" stroke="#fff" stroke-width="2.8" />
<line x1="680.2" y1="264.0" x2="680.2" y2="343.0" stroke="#fff" stroke-width="2.8" />
<line x1="691.1" y1="264.0" x2="691.1" y2="343.0" stroke="#fff" stroke-width="2.8" />
<line x1="702.0" y1="264.0" x2="702.0" y2="343.0" stroke="#fff" stroke-width="2.8" />
<rect x="712.6" y="270.1" width="12.2" height="67.0" fill="#fff" />
<rect x="715.2" y="275.1" width="7.2" height="57.8" fill="#000" />
<rect x="724.6" y="287.2" width="31.8" height="33.1" fill="#fff" />
<ellipse cx="686.1" cy="303.6" rx="2.3" ry="5" fill="#000" stroke="#fff" stroke-width="2.6"/>
<ellipse cx="696.6" cy="303.6" rx="2.3" ry="5" fill="#000" stroke="#fff" stroke-width="2.6"/>
<ellipse cx="707.3" cy="303.6" rx="2.3" ry="5" fill="#000" stroke="#fff" stroke-width="2.6"/>
<ellipse cx="718.2" cy="303.6" rx="2.3" ry="5" fill="#000" stroke="#fff" stroke-width="2.6"/>
<ellipse cx="729.1" cy="303.6" rx="1.5" ry="3.4" fill="#000"/>
<line x1="726.5" y1="290.5" x2="731.7" y2="290.5" stroke="#c02020" stroke-width="1.2" />
<line x1="729.1" y1="288.7" x2="729.1" y2="292.3" stroke="#c02020" stroke-width="0.8" />
<line x1="726.5" y1="317.3" x2="731.7" y2="317.3" stroke="#c02020" stroke-width="1.2" />
<line x1="729.1" y1="315.5" x2="729.1" y2="319.1" stroke="#c02020" stroke-width="0.8" />
<ellipse cx="740.1" cy="303.6" rx="1.5" ry="3.4" fill="#000"/>
<line x1="737.5" y1="290.5" x2="742.7" y2="290.5" stroke="#c02020" stroke-width="1.2" />
<line x1="740.1" y1="288.7" x2="740.1" y2="292.3" stroke="#c02020" stroke-width="0.8" />
<line x1="737.5" y1="317.3" x2="742.7" y2="317.3" stroke="#c02020" stroke-width="1.2" />
<line x1="740.1" y1="315.5" x2="740.1" y2="319.1" stroke="#c02020" stroke-width="0.8" />
<ellipse cx="750.9" cy="303.6" rx="1.5" ry="3.4" fill="#000"/>
<line x1="748.3" y1="290.5" x2="753.5" y2="290.5" stroke="#c02020" stroke-width="1.2" />
<line x1="750.9" y1="288.7" x2="750.9" y2="292.3" stroke="#c02020" stroke-width="0.8" />
<line x1="748.3" y1="317.3" x2="753.5" y2="317.3" stroke="#c02020" stroke-width="1.2" />
<line x1="750.9" y1="315.5" x2="750.9" y2="319.1" stroke="#c02020" stroke-width="0.8" />
<rect x="734.1" y="296.5" width="1.0" height="1.0" fill="#803030" />
<rect x="734.1" y="309.5" width="1.0" height="1.0" fill="#803030" />
<rect x="745.0" y="296.5" width="1.0" height="1.0" fill="#803030" />
<rect x="745.0" y="309.5" width="1.0" height="1.0" fill="#803030" />
<line x1="644.0" y1="303.6" x2="774.0" y2="303.6" stroke="#a03030" stroke-width="1.2" />
<circle cx="674.7" cy="303.6" r="2" fill="#f0c8c8" stroke="#fff" stroke-width="0.8"/>
<circle cx="696.6" cy="268.8" r="2.4" fill="#f4d0d0"/>
<line x1="694.2" y1="268.8" x2="699.0" y2="268.8" stroke="#c02020" stroke-width="0.8" />
<line x1="696.6" y1="266.4" x2="696.6" y2="271.2" stroke="#c02020" stroke-width="0.8" />
<circle cx="707.3" cy="268.8" r="2.4" fill="#f4d0d0"/>
<line x1="704.9" y1="268.8" x2="709.7" y2="268.8" stroke="#c02020" stroke-width="0.8" />
<line x1="707.3" y1="266.4" x2="707.3" y2="271.2" stroke="#c02020" stroke-width="0.8" />
<circle cx="696.6" cy="338.7" r="2.4" fill="#f4d0d0"/>
<line x1="694.2" y1="338.7" x2="699.0" y2="338.7" stroke="#c02020" stroke-width="0.8" />
<line x1="696.6" y1="336.3" x2="696.6" y2="341.1" stroke="#c02020" stroke-width="0.8" />
<circle cx="707.3" cy="338.7" r="2.4" fill="#f4d0d0"/>
<line x1="704.9" y1="338.7" x2="709.7" y2="338.7" stroke="#c02020" stroke-width="0.8" />
<line x1="707.3" y1="336.3" x2="707.3" y2="341.1" stroke="#c02020" stroke-width="0.8" />
<line x1="651.7" y1="263.4" x2="651.7" y2="343.0" stroke="#60dcd8" stroke-width="1" />
<line x1="651.7" y1="263.4" x2="658.0" y2="263.4" stroke="#60dcd8" stroke-width="0.8" />
<line x1="648.0" y1="343.4" x2="658.0" y2="343.4" stroke="#60dcd8" stroke-width="0.8" />
<rect x="650.6" y="299.4" width="2.3" height="8.4" fill="#18e0e0" />
<line x1="655.0" y1="260.4" x2="668.5" y2="260.4" stroke="#60dcd8" stroke-width="0.9" />
<line x1="658.0" y1="257.5" x2="658.0" y2="264.0" stroke="#60dcd8" stroke-width="0.9" />
<rect x="662.6" y="257.4" width="5.9" height="2.4" fill="#18e0e0" />
<path d="M642.5 346.6 L647.8 340.4" stroke="#60dcd8" stroke-width="1.4"/>
<rect x="642.6" y="344.4" width="3.4" height="2.2" fill="#18e0e0" />
<line x1="663.5" y1="343.8" x2="663.5" y2="351.3" stroke="#38c0c0" stroke-width="1" />
<rect x="661.5" y="351.3" width="4.0" height="11.7" fill="#18e0e0" />
<line x1="673.8" y1="343.8" x2="673.8" y2="351.3" stroke="#38c0c0" stroke-width="1" />
<rect x="671.8" y="351.3" width="4.0" height="7.5" fill="#18e0e0" />
<line x1="685.2" y1="343.8" x2="685.2" y2="351.3" stroke="#38c0c0" stroke-width="1" />
<rect x="683.2" y="351.3" width="4.0" height="12.5" fill="#18e0e0" />
<line x1="696.6" y1="343.8" x2="696.6" y2="351.3" stroke="#38c0c0" stroke-width="1" />
<rect x="694.6" y="351.3" width="4.0" height="7.5" fill="#18e0e0" />
<line x1="707.3" y1="343.8" x2="707.3" y2="351.3" stroke="#38c0c0" stroke-width="1" />
<rect x="705.3" y="351.3" width="4.0" height="8.3" fill="#18e0e0" />
<line x1="717.9" y1="337.0" x2="717.9" y2="352.0" stroke="#38c0c0" stroke-width="1" />
<rect x="715.9" y="352.0" width="4.0" height="7.6" fill="#18e0e0" />
<line x1="729.1" y1="320.3" x2="729.1" y2="352.0" stroke="#38c0c0" stroke-width="1" />
<rect x="727.1" y="352.0" width="4.0" height="7.6" fill="#18e0e0" />
<line x1="739.6" y1="320.3" x2="739.6" y2="352.0" stroke="#38c0c0" stroke-width="1" />
<rect x="737.6" y="352.0" width="4.0" height="11.0" fill="#18e0e0" />
<line x1="750.5" y1="320.3" x2="750.5" y2="353.8" stroke="#38c0c0" stroke-width="1" />
<rect x="748.5" y="353.8" width="4.0" height="6.6" fill="#18e0e0" />
<rect x="674.7" y="187.6" width="3.5" height="25.4" fill="#fff" />
<rect x="690.2" y="187.6" width="3.8" height="25.4" fill="#fff" />
<rect x="674.7" y="187.6" width="19.3" height="3.4" fill="#ffe0ec" />
<rect x="679.6" y="188.2" width="1.6" height="2.2" fill="#e080a0" />
<rect x="683.4" y="188.2" width="1.6" height="2.2" fill="#e080a0" />
<rect x="687.2" y="188.2" width="1.6" height="2.2" fill="#e080a0" />
<rect x="667.6" y="212.4" width="10.6" height="3.0" fill="#ffd8e8" />
<rect x="690.2" y="212.4" width="9.2" height="3.0" fill="#ffd8e8" />
<path d="M674.7 188.4 H663.4 V214 H668" fill="none" stroke="#90e8dc" stroke-width="0.9"/>
<path d="M676.8 215 V218.5 H691.5 V215" fill="none" stroke="#90e8dc" stroke-width="0.9"/>
<path d="M667.8 215 V222.3 H699.8 V215" fill="none" stroke="#90e8dc" stroke-width="0.9"/>
<path d="M701.5 208.9 V218.5 H703.6" fill="none" stroke="#90e8dc" stroke-width="0.9"/>
<rect x="702.2" y="217.4" width="2.0" height="2.2" fill="#30e0d8" />
<circle cx="673.3" cy="185.5" r="1.3" fill="#40d8c8"/>
<circle cx="695.2" cy="185.0" r="1.3" fill="#40d8c8"/>
<circle cx="680.2" cy="213.6" r="1.3" fill="#40d8c8"/>
<circle cx="686.9" cy="214.2" r="1.3" fill="#40d8c8"/>
<line x1="673.3" y1="185.5" x2="675.6" y2="188.0" stroke="#90e8dc" stroke-width="0.8" />
<line x1="695.2" y1="185.0" x2="692.8" y2="188.0" stroke="#90e8dc" stroke-width="0.8" />
<path d="M662 456.9 H676.1 V461.1 H713.3 V465.8 H760.2 V469.4 H727.8 V474.2 H690.6 V477.8 H726.1 V482 H662 Z" fill="#22f02a"/>
<line x1="793.4" y1="404.2" x2="877.6" y2="404.2" stroke="#48c8c8" stroke-width="0.7" />
<line x1="793.4" y1="407.5" x2="877.6" y2="407.5" stroke="#48c8c8" stroke-width="0.7" />
<line x1="793.4" y1="410.8" x2="877.6" y2="410.8" stroke="#48c8c8" stroke-width="0.7" />
<line x1="793.4" y1="414.1" x2="877.6" y2="414.1" stroke="#48c8c8" stroke-width="0.7" />
<line x1="793.4" y1="417.3" x2="877.6" y2="417.3" stroke="#48c8c8" stroke-width="0.7" />
<line x1="793.4" y1="420.6" x2="877.6" y2="420.6" stroke="#48c8c8" stroke-width="0.7" />
<line x1="793.4" y1="423.9" x2="877.6" y2="423.9" stroke="#48c8c8" stroke-width="0.7" />
<line x1="793.4" y1="427.2" x2="877.6" y2="427.2" stroke="#48c8c8" stroke-width="0.7" />
<line x1="793.4" y1="430.5" x2="877.6" y2="430.5" stroke="#48c8c8" stroke-width="0.7" />
<line x1="793.4" y1="433.8" x2="877.6" y2="433.8" stroke="#48c8c8" stroke-width="0.7" />
<line x1="793.4" y1="437.0" x2="877.6" y2="437.0" stroke="#48c8c8" stroke-width="0.7" />
<line x1="793.4" y1="440.3" x2="877.6" y2="440.3" stroke="#48c8c8" stroke-width="0.7" />
<line x1="793.4" y1="443.6" x2="877.6" y2="443.6" stroke="#48c8c8" stroke-width="0.7" />
<line x1="793.4" y1="446.9" x2="877.6" y2="446.9" stroke="#48c8c8" stroke-width="0.7" />
<line x1="793.4" y1="450.2" x2="877.6" y2="450.2" stroke="#48c8c8" stroke-width="0.7" />
<line x1="793.4" y1="453.4" x2="877.6" y2="453.4" stroke="#48c8c8" stroke-width="0.7" />
<line x1="793.4" y1="456.7" x2="877.6" y2="456.7" stroke="#48c8c8" stroke-width="0.7" />
<line x1="793.4" y1="460.0" x2="877.6" y2="460.0" stroke="#48c8c8" stroke-width="0.7" />
<line x1="793.4" y1="463.3" x2="877.6" y2="463.3" stroke="#48c8c8" stroke-width="0.7" />
<line x1="793.4" y1="466.6" x2="877.6" y2="466.6" stroke="#48c8c8" stroke-width="0.7" />
<line x1="793.4" y1="469.9" x2="877.6" y2="469.9" stroke="#48c8c8" stroke-width="0.7" />
<line x1="793.4" y1="473.1" x2="877.6" y2="473.1" stroke="#48c8c8" stroke-width="0.7" />
<line x1="793.4" y1="476.4" x2="877.6" y2="476.4" stroke="#48c8c8" stroke-width="0.7" />
<line x1="793.4" y1="479.7" x2="877.6" y2="479.7" stroke="#48c8c8" stroke-width="0.7" />
<line x1="793.4" y1="483.0" x2="877.6" y2="483.0" stroke="#48c8c8" stroke-width="0.7" />
<line x1="793.4" y1="404.2" x2="793.4" y2="483.0" stroke="#48c8c8" stroke-width="0.8" />
<line x1="799.6" y1="404.2" x2="799.6" y2="483.0" stroke="#48c8c8" stroke-width="0.8" />
<line x1="821.6" y1="404.2" x2="821.6" y2="483.0" stroke="#48c8c8" stroke-width="0.8" />
<line x1="833.0" y1="404.2" x2="833.0" y2="483.0" stroke="#48c8c8" stroke-width="0.8" />
<line x1="838.4" y1="404.2" x2="838.4" y2="483.0" stroke="#48c8c8" stroke-width="0.8" />
<line x1="844.6" y1="404.2" x2="844.6" y2="483.0" stroke="#48c8c8" stroke-width="0.8" />
<line x1="848.4" y1="404.2" x2="848.4" y2="483.0" stroke="#48c8c8" stroke-width="0.8" />
<line x1="857.4" y1="404.2" x2="857.4" y2="483.0" stroke="#48c8c8" stroke-width="0.8" />
<line x1="866.6" y1="404.2" x2="866.6" y2="483.0" stroke="#48c8c8" stroke-width="0.8" />
<line x1="877.6" y1="404.2" x2="877.6" y2="483.0" stroke="#48c8c8" stroke-width="0.8" />
<rect x="795.0" y="404.9" width="2.6" height="2.1" fill="#22f02a" />
<rect x="802.1" y="404.6" width="18.2" height="3.1" fill="#22f02a" />
<rect x="824.2" y="404.7" width="7.0" height="2.8" fill="#22f02a" />
<rect x="834.0" y="405.0" width="2.6" height="2.0" fill="#22f02a" />
<rect x="850.4" y="404.6" width="4.5" height="3.1" fill="#22f02a" />
<rect x="795.0" y="408.2" width="2.6" height="2.1" fill="#22f02a" />
<rect x="802.1" y="407.9" width="18.2" height="3.1" fill="#22f02a" />
<rect x="824.2" y="408.0" width="6.5" height="2.8" fill="#22f02a" />
<rect x="850.4" y="407.9" width="4.5" height="3.1" fill="#22f02a" />
<rect x="795.0" y="411.5" width="2.6" height="2.1" fill="#22f02a" />
<rect x="802.1" y="411.2" width="18.2" height="3.1" fill="#22f02a" />
<rect x="824.2" y="411.3" width="7.0" height="2.8" fill="#22f02a" />
<rect x="834.0" y="411.6" width="2.6" height="2.0" fill="#22f02a" />
<rect x="850.4" y="411.2" width="4.5" height="3.1" fill="#22f02a" />
<rect x="795.0" y="414.8" width="2.6" height="2.1" fill="#22f02a" />
<rect x="800.6" y="414.4" width="21.2" height="3.1" fill="#22f02a" />
<rect x="824.2" y="414.6" width="8.5" height="2.8" fill="#22f02a" />
<rect x="834.0" y="414.9" width="2.6" height="2.0" fill="#22f02a" />
<rect x="850.4" y="414.4" width="4.0" height="3.1" fill="#22f02a" />
<rect x="795.0" y="418.0" width="2.6" height="2.1" fill="#22f02a" />
<rect x="802.1" y="417.7" width="18.2" height="3.1" fill="#22f02a" />
<rect x="824.2" y="417.8" width="7.0" height="2.8" fill="#22f02a" />
<rect x="850.4" y="417.7" width="4.0" height="3.1" fill="#22f02a" />
<rect x="795.0" y="421.3" width="2.6" height="2.1" fill="#22f02a" />
<rect x="802.1" y="421.0" width="18.2" height="3.1" fill="#22f02a" />
<rect x="824.2" y="421.1" width="6.5" height="2.8" fill="#22f02a" />
<rect x="834.0" y="421.4" width="2.6" height="2.0" fill="#22f02a" />
<rect x="850.4" y="421.0" width="4.5" height="3.1" fill="#22f02a" />
<rect x="795.0" y="424.6" width="2.6" height="2.1" fill="#22f02a" />
<rect x="802.3" y="424.3" width="17.7" height="3.1" fill="#22f02a" />
<rect x="824.2" y="424.4" width="6.5" height="2.8" fill="#22f02a" />
<rect x="834.0" y="424.7" width="2.6" height="2.0" fill="#22f02a" />
<rect x="850.4" y="424.3" width="4.0" height="3.1" fill="#22f02a" />
<rect x="795.0" y="427.9" width="2.6" height="2.1" fill="#22f02a" />
<rect x="800.6" y="427.6" width="21.2" height="3.1" fill="#22f02a" />
<rect x="824.2" y="427.7" width="9.0" height="2.8" fill="#22f02a" />
<rect x="850.4" y="427.6" width="4.0" height="3.1" fill="#22f02a" />
<rect x="795.0" y="431.2" width="2.6" height="2.1" fill="#22f02a" />
<rect x="802.1" y="430.9" width="18.2" height="3.1" fill="#22f02a" />
<rect x="824.2" y="431.0" width="7.0" height="2.8" fill="#22f02a" />
<rect x="834.0" y="431.3" width="2.6" height="2.0" fill="#22f02a" />
<rect x="850.4" y="430.9" width="3.5" height="3.1" fill="#22f02a" />
<rect x="795.0" y="434.4" width="2.6" height="2.1" fill="#22f02a" />
<rect x="802.3" y="434.1" width="17.7" height="3.1" fill="#22f02a" />
<rect x="824.2" y="434.2" width="6.5" height="2.8" fill="#22f02a" />
<rect x="834.0" y="434.6" width="2.6" height="2.0" fill="#22f02a" />
<rect x="795.0" y="437.7" width="2.6" height="2.1" fill="#22f02a" />
<rect x="802.6" y="437.4" width="17.2" height="3.1" fill="#22f02a" />
<rect x="824.2" y="437.5" width="6.5" height="2.8" fill="#22f02a" />
<rect x="850.4" y="437.4" width="4.5" height="3.1" fill="#22f02a" />
<rect x="795.0" y="441.0" width="2.6" height="2.1" fill="#22f02a" />
<rect x="802.6" y="440.7" width="17.2" height="3.1" fill="#22f02a" />
<rect x="824.2" y="440.8" width="7.0" height="2.8" fill="#22f02a" />
<rect x="834.0" y="441.1" width="2.6" height="2.0" fill="#22f02a" />
<rect x="850.4" y="440.7" width="4.5" height="3.1" fill="#22f02a" />
<rect x="795.0" y="444.3" width="2.6" height="2.1" fill="#22f02a" />
<rect x="802.8" y="444.0" width="16.7" height="3.1" fill="#22f02a" />
<rect x="824.2" y="444.1" width="6.0" height="2.8" fill="#22f02a" />
<rect x="834.0" y="444.4" width="2.6" height="2.0" fill="#22f02a" />
<rect x="850.4" y="444.0" width="4.0" height="3.1" fill="#22f02a" />
<rect x="795.0" y="447.6" width="2.6" height="2.1" fill="#22f02a" />
<rect x="802.8" y="447.3" width="16.7" height="3.1" fill="#22f02a" />
<rect x="824.2" y="447.4" width="6.0" height="2.8" fill="#22f02a" />
<rect x="850.4" y="447.3" width="4.0" height="3.1" fill="#22f02a" />
<rect x="795.0" y="450.9" width="2.6" height="2.1" fill="#22f02a" />
<rect x="803.1" y="450.6" width="16.2" height="3.1" fill="#22f02a" />
<rect x="824.2" y="450.7" width="5.5" height="2.8" fill="#22f02a" />
<rect x="834.0" y="451.0" width="2.6" height="2.0" fill="#22f02a" />
<rect x="850.4" y="450.6" width="4.0" height="3.1" fill="#22f02a" />
<rect x="795.0" y="454.1" width="2.6" height="2.1" fill="#22f02a" />
<rect x="803.1" y="453.8" width="16.2" height="3.1" fill="#22f02a" />
<rect x="824.2" y="453.9" width="6.0" height="2.8" fill="#22f02a" />
<rect x="834.0" y="454.2" width="2.6" height="2.0" fill="#22f02a" />
<rect x="795.0" y="457.4" width="2.6" height="2.1" fill="#22f02a" />
<rect x="803.6" y="457.1" width="15.2" height="3.1" fill="#22f02a" />
<rect x="824.2" y="457.2" width="6.0" height="2.8" fill="#22f02a" />
<rect x="850.4" y="457.1" width="4.5" height="3.1" fill="#22f02a" />
<rect x="795.0" y="460.7" width="2.6" height="2.1" fill="#22f02a" />
<rect x="803.6" y="460.4" width="15.2" height="3.1" fill="#22f02a" />
<rect x="824.2" y="460.5" width="5.5" height="2.8" fill="#22f02a" />
<rect x="834.0" y="460.8" width="2.6" height="2.0" fill="#22f02a" />
<rect x="850.4" y="460.4" width="4.5" height="3.1" fill="#22f02a" />
<rect x="795.0" y="464.0" width="2.6" height="2.1" fill="#22f02a" />
<rect x="803.8" y="463.7" width="14.7" height="3.1" fill="#22f02a" />
<rect x="824.2" y="463.8" width="6.5" height="2.8" fill="#22f02a" />
<rect x="834.0" y="464.1" width="2.6" height="2.0" fill="#22f02a" />
<rect x="850.4" y="463.7" width="4.5" height="3.1" fill="#22f02a" />
<rect x="795.0" y="467.3" width="2.6" height="2.1" fill="#22f02a" />
<rect x="804.1" y="467.0" width="14.2" height="3.1" fill="#22f02a" />
<rect x="824.2" y="467.1" width="6.5" height="2.8" fill="#22f02a" />
<rect x="850.4" y="467.0" width="4.5" height="3.1" fill="#22f02a" />
<rect x="795.0" y="470.6" width="2.6" height="2.1" fill="#22f02a" />
<rect x="804.3" y="470.3" width="13.7" height="3.1" fill="#22f02a" />
<rect x="824.2" y="470.4" width="6.0" height="2.8" fill="#22f02a" />
<rect x="834.0" y="470.7" width="2.6" height="2.0" fill="#22f02a" />
<rect x="850.4" y="470.3" width="4.0" height="3.1" fill="#22f02a" />
<rect x="795.0" y="473.8" width="2.6" height="2.1" fill="#22f02a" />
<rect x="804.6" y="473.5" width="13.2" height="3.1" fill="#22f02a" />
<rect x="824.2" y="473.6" width="7.0" height="2.8" fill="#22f02a" />
<rect x="834.0" y="473.9" width="2.6" height="2.0" fill="#22f02a" />
<rect x="850.4" y="473.5" width="4.0" height="3.1" fill="#22f02a" />
<rect x="795.0" y="477.1" width="2.6" height="2.1" fill="#22f02a" />
<rect x="804.8" y="476.8" width="12.7" height="3.1" fill="#22f02a" />
<rect x="824.2" y="476.9" width="6.0" height="2.8" fill="#22f02a" />
<rect x="850.4" y="476.8" width="4.5" height="3.1" fill="#22f02a" />
<rect x="795.0" y="480.4" width="2.6" height="2.1" fill="#22f02a" />
<rect x="805.1" y="480.1" width="12.2" height="3.1" fill="#22f02a" />
<rect x="824.2" y="480.2" width="5.0" height="2.8" fill="#22f02a" />
<rect x="834.0" y="480.5" width="2.6" height="2.0" fill="#22f02a" />
<rect x="850.4" y="480.1" width="4.0" height="3.1" fill="#22f02a" />
<rect x="820.0" y="414.7" width="3.0" height="2.3" fill="#0a3010" />
<rect x="820.0" y="427.8" width="3.0" height="2.3" fill="#0a3010" />
<rect x="795.6" y="484.6" width="81.8" height="20.0" fill="none" stroke="#f0f0f0" stroke-width="1.1" />
<line x1="800.4" y1="484.6" x2="800.4" y2="504.6" stroke="#d8f0e0" stroke-width="0.8" />
<line x1="805.6" y1="484.6" x2="805.6" y2="504.6" stroke="#d8f0e0" stroke-width="0.8" />
<line x1="811.0" y1="484.6" x2="811.0" y2="504.6" stroke="#d8f0e0" stroke-width="0.8" />
<line x1="816.6" y1="484.6" x2="816.6" y2="504.6" stroke="#d8f0e0" stroke-width="0.8" />
<line x1="823.2" y1="484.6" x2="823.2" y2="504.6" stroke="#d8f0e0" stroke-width="0.8" />
<line x1="849.2" y1="484.6" x2="849.2" y2="504.6" stroke="#d8f0e0" stroke-width="0.8" />
<line x1="795.6" y1="488.0" x2="823.2" y2="488.0" stroke="#d8f0e0" stroke-width="0.7" />
<line x1="795.6" y1="491.2" x2="823.2" y2="491.2" stroke="#d8f0e0" stroke-width="0.7" />
<line x1="795.6" y1="494.6" x2="823.2" y2="494.6" stroke="#d8f0e0" stroke-width="0.7" />
<line x1="795.6" y1="498.0" x2="823.2" y2="498.0" stroke="#d8f0e0" stroke-width="0.7" />
<line x1="795.6" y1="501.4" x2="823.2" y2="501.4" stroke="#d8f0e0" stroke-width="0.7" />
<line x1="823.2" y1="495.0" x2="849.2" y2="495.0" stroke="#f0f0f0" stroke-width="1" />
<line x1="829.0" y1="495.0" x2="829.0" y2="504.6" stroke="#d8f0e0" stroke-width="0.8" />
<line x1="835.0" y1="495.0" x2="835.0" y2="504.6" stroke="#d8f0e0" stroke-width="0.8" />
<line x1="841.4" y1="495.0" x2="841.4" y2="504.6" stroke="#d8f0e0" stroke-width="0.8" />
<rect x="824.0" y="485.4" width="24.6" height="9.0" fill="#000" />
<rect x="833.2" y="488.4" width="10.4" height="4.2" fill="#22f02a" />
<rect x="852.0" y="486.7" width="28.4" height="3.9" fill="#22f02a" />
<rect x="856.0" y="493.7" width="21.0" height="3.8" fill="#22f02a" />
<rect x="856.0" y="499.6" width="24.4" height="4.2" fill="#22f02a" />
<rect x="796.6" y="492.0" width="25.4" height="3.4" fill="#22f02a" />
<rect x="797.0" y="497.0" width="3.0" height="6.6" fill="#22f02a" />
<rect x="802.0" y="497.2" width="8.0" height="3.2" fill="#22f02a" />
<rect x="812.0" y="499.0" width="9.0" height="4.8" fill="#22f02a" />
<rect x="825.0" y="497.2" width="8.6" height="3.6" fill="#22f02a" />
<rect x="836.0" y="497.6" width="11.6" height="6.0" fill="#22f02a" />
<rect x="801.0" y="501.6" width="7.0" height="2.4" fill="#22f02a" />
<line x1="849.2" y1="491.6" x2="877.4" y2="491.6" stroke="#f0f0f0" stroke-width="0.9" />
<line x1="849.2" y1="498.4" x2="877.4" y2="498.4" stroke="#f0f0f0" stroke-width="0.9" />
<rect x="1010.6" y="296.2" width="6.8" height="7.2" fill="#f4ecb0" />
<rect x="1019.0" y="296.2" width="4.0" height="7.2" fill="#f4ecb0" />
<path d="M1015.4 298 L1012.8 299.8 L1015.4 301.6" stroke="#403000" stroke-width="0.9" fill="none"/>
<path d="M1022.8 298 L1020.4 299.8 L1022.8 301.6" stroke="#403000" stroke-width="0.9" fill="none"/>
<rect x="1002.6" y="314.4" width="7.2" height="6.8" fill="#20dce0" />
<line x1="1002.6" y1="317.6" x2="1009.8" y2="317.6" stroke="#0a7080" stroke-width="0.6" />
<line x1="998.6" y1="322.4" x2="1023.0" y2="322.4" stroke="#50d8d0" stroke-width="1" />
<line x1="999.6" y1="322.4" x2="999.6" y2="435.4" stroke="#50d8d0" stroke-width="1" />
<line x1="1003.0" y1="322.4" x2="1003.0" y2="328.0" stroke="#50d8d0" stroke-width="0.9" />
<line x1="1003.0" y1="328.0" x2="1011.0" y2="328.0" stroke="#50d8d0" stroke-width="0.8" />
<line x1="1009.0" y1="313.4" x2="1018.0" y2="313.4" stroke="#50d8d0" stroke-width="0.8" />
<line x1="1018.0" y1="313.4" x2="1018.0" y2="322.0" stroke="#50d8d0" stroke-width="0.8" />
<rect x="995.8" y="378.2" width="7.8" height="2.2" fill="#20dce0" />
<line x1="1011.6" y1="322.6" x2="1011.6" y2="434.6" stroke="#fff" stroke-width="2.4" />
<line x1="1010.4" y1="323.2" x2="1023.0" y2="323.2" stroke="#fff" stroke-width="1.6" />
<line x1="998.0" y1="429.2" x2="1023.0" y2="429.2" stroke="#fff" stroke-width="2" />
<line x1="1010.4" y1="435.2" x2="1023.0" y2="435.2" stroke="#fff" stroke-width="1.4" />
<line x1="999.6" y1="435.4" x2="1011.0" y2="435.4" stroke="#50d8d0" stroke-width="0.9" />
<line x1="1011.6" y1="435.4" x2="1011.6" y2="445.3" stroke="#50d8d0" stroke-width="1" />
<line x1="1011.6" y1="445.3" x2="1023.0" y2="445.3" stroke="#50d8d0" stroke-width="1.2" />
<line x1="1018.2" y1="318.0" x2="1018.2" y2="440.0" stroke="#701c1c" stroke-width="0.7" />
<path d="M1018.2 326.2 L1021 329 L1018.2 331.8 L1015.4 329 Z" fill="#fff"/>
<path d="M1018.2 376.5 L1021 379.3 L1018.2 382.1 L1015.4 379.3 Z" fill="#fff"/>
<path d="M1018.2 426.4 L1021 429.2 L1018.2 432.0 L1015.4 429.2 Z" fill="#e8ffff"/>
<line x1="1015.8" y1="379.3" x2="1020.6" y2="379.3" stroke="#c02020" stroke-width="0.9" />
<line x1="1018.2" y1="377.0" x2="1018.2" y2="381.6" stroke="#c02020" stroke-width="0.9" />
<path d="M993.8 425.6 V428.6 H996" stroke="#e0e0e0" stroke-width="0.9" fill="none"/>
</svg>
<!--/CAD-->
<div class="abs" style="left:316px;top:511px;width:710px;height:9px;background:#fff;"></div>

<!-- tabs -->
<div class="abs" style="left:316px;top:520px;width:56px;height:24px;background:#fff;"></div>
<div class="abs" style="left:372px;top:521px;width:60px;height:22px;background:#f3f3f3;box-sizing:border-box;border:1px solid #e4e4e4;"></div>
<div class="abs" style="left:432px;top:521px;width:47px;height:22px;background:#f3f3f3;box-sizing:border-box;border:1px solid #e4e4e4;border-left:none;"></div>
<div class="t" style="left:323px;top:524px;font-size:14.5px;letter-spacing:0.9px;">Model</div>
<div class="t" style="left:376px;top:523px;font-size:14.5px;">Layout1</div>
<div class="t" style="left:437px;top:523px;">布局1</div>

<div class="cb" style="left:312.4px;top:557px;"></div>
<svg class="abs" style="left:312.4px;top:557px" width="14" height="14" viewBox="0 0 14 14"><path d="M3 7 L5.8 10 L11 4" stroke="#222" stroke-width="1.2" fill="none"/></svg>
<div class="t" style="left:330px;top:555px;">输入此图纸为:</div>
<div class="inp" style="left:476px;top:547px;width:232px;height:26px;border-color:#a2a2a2;"><span style="left:4px;top:1px;font-size:14.5px;">Model</span></div>

<!-- status -->
<div class="abs" style="left:312px;top:582px;width:717px;height:22px;box-sizing:border-box;border-top:1px solid #a0a0a0;border-left:1px solid #a0a0a0;border-bottom:1px solid #fff;border-right:1px solid #fff;"></div>
<div class="t" style="left:314px;top:585px;font-size:13.2px;">拖动来滚动视图。</div>


</body>
</html>
